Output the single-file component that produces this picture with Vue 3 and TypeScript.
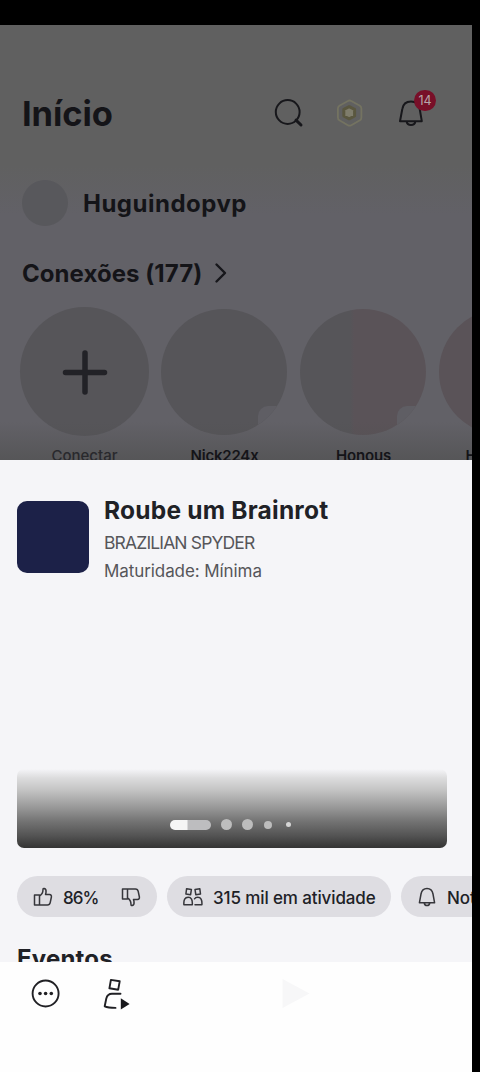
<script setup lang="ts">
interface Friend {
  name: string
  tone: string
  status: boolean
}

const friends: Friend[] = [
  { name: 'Nick224x', tone: 'cool', status: true },
  { name: 'Honous', tone: 'mixed', status: true },
  { name: 'Henrique2', tone: 'rosy', status: false },
]
</script>

<template>
  <div class="device">
    <div class="screen">
      <section class="home">
        <header class="topbar">
          <h1>Início</h1>
          <div class="actions">
            <svg class="search" width="30" height="30" viewBox="0 0 30 30">
              <circle cx="13.700" cy="14" r="11.900" />
              <path class="handle" d="M22 22.200 L27 27" />
            </svg>
            <svg class="coin" width="30" height="30" viewBox="0 0 30 30">
              <path class="rim" d="M12.900 3 Q14.600 2 16.300 3 L24.900 7.800 Q26.400 8.800 26.400 10.600 V19.400 Q26.400 21.200 24.900 22.200 L16.300 27.200 Q14.600 28.200 12.900 27.200 L4.400 22.200 Q2.900 21.200 2.900 19.400 V10.600 Q2.900 8.800 4.400 7.800 Z" />
              <path class="core" d="M14.200 8.700 L19.600 11.300 V18 L14.200 20.800 L8.800 18 V11.300 Z" />
            </svg>
            <div class="alerts">
              <svg width="28" height="28" viewBox="0 0 28 28">
                <path d="M3 23.200 L5.300 11 Q6.500 3.500 14 3.500 Q21.500 3.500 22.700 11 L24.800 23.200 Z M9.600 23.500 Q10.300 27 14 27 Q17.700 27 18.400 23.500" />
              </svg>
              <span class="count">14</span>
            </div>
          </div>
        </header>

        <div class="profile">
          <span class="avatar"></span>
          <span class="username">Huguindopvp</span>
        </div>

        <h2 class="connections">
          <span>Conexões (177)</span>
          <svg width="14" height="22" viewBox="0 0 14 22"><path d="M2.500 2.500 L11 11 L2.500 19.500" /></svg>
        </h2>

        <div class="friends">
          <div class="friend add">
            <div class="bubble">
              <svg width="46" height="46" viewBox="0 0 46 46"><path d="M23 4 V43 M3.500 23.500 H42.500" /></svg>
            </div>
            <span class="name">Conectar</span>
          </div>
          <div v-for="f in friends" :key="f.name" class="friend">
            <div class="bubble" :class="f.tone"><i v-if="f.status"></i></div>
            <span class="name">{{ f.name }}</span>
          </div>
        </div>
        <div class="shade"></div>
      </section>

      <section class="sheet">
        <div class="game">
          <div class="thumb"></div>
          <div class="details">
            <h2>Roube um Brainrot</h2>
            <p class="creator">BRAZILIAN SPYDER</p>
            <p class="rating">Maturidade: Mínima</p>
          </div>
        </div>

        <div class="carousel">
          <div class="pager">
            <span class="current"></span>
            <span class="dot"></span>
            <span class="dot"></span>
            <span class="dot small"></span>
            <span class="dot tiny"></span>
          </div>
        </div>

        <div class="chips">
          <div class="chip votes">
            <svg width="20" height="20" viewBox="0 0 20 20">
              <path d="M1.500 8 H6.500 V18 H1.500 Z M6.500 9 Q10 7 10 2.500 Q10 1.200 11.300 1.500 Q13.500 2 13 5.500 L12.500 7.500 H16.500 Q18.700 7.700 18.400 10 L17.200 15.700 Q16.700 18 14.500 18 H6.500" />
            </svg>
            <span class="percent">86%</span>
            <svg class="down" width="20" height="20" viewBox="0 0 20 20">
              <path d="M1.500 2 H6.500 V12 H1.500 Z M6.500 11 Q10 13 10 17.500 Q10 18.800 11.300 18.500 Q13.500 18 13 14.500 L12.500 12.500 H16.500 Q18.700 12.300 18.400 10 L17.200 4.300 Q16.700 2 14.500 2 H6.500" />
            </svg>
          </div>
          <div class="chip active">
            <svg width="20" height="20" viewBox="0 0 20 20">
              <path d="M3.600 1.700 L8.400 2.400 L7.600 7.700 L2.900 7 Z M12 2.400 L16.800 1.700 L17.500 7 L12.800 7.700 Z M.900 17.800 Q.3 10.300 5.200 10.300 Q9.800 10.300 9.300 17.800 Z M12 17.800 H18.900 Q19.400 10.300 14.700 10.300 Q12.500 10.300 11.500 11.800" />
            </svg>
            <span>315 mil em atividade</span>
          </div>
          <div class="chip notify">
            <svg width="18" height="20" viewBox="0 0 18 20">
              <path d="M1.400 15.800 L3 7 Q4 1.600 9 1.600 Q14 1.600 15 7 L16.600 15.800 Z M6.200 16 Q6.800 18.600 9 18.600 Q11.200 18.600 11.800 16" />
            </svg>
            <span>Notificar</span>
          </div>
        </div>

        <h2 class="events">Eventos</h2>
      </section>

      <footer class="bar">
        <svg class="more" width="30" height="30" viewBox="0 0 30 30">
          <circle class="ring" cx="14.600" cy="15.500" r="13" />
          <circle cx="9" cy="15.500" r="1.800" /><circle cx="14.600" cy="15.500" r="1.800" /><circle cx="20.300" cy="15.500" r="1.800" />
        </svg>
        <svg class="join" width="28" height="32" viewBox="0 0 28 32">
          <path class="line" d="M7.900 1.900 L16.700 3.300 L15.200 11.700 L6.400 10.300 Z M17.500 15.700 H9 Q4.500 15.700 3.300 20.500 L1.700 28.300 Q5 29.700 12.500 29.900" />
          <path d="M17.800 20.200 L26.600 25.900 L17.800 31.600 Z" />
        </svg>
        <svg class="play" width="30" height="32" viewBox="0 0 30 32"><path d="M.500 1 L27.500 15.500 L.500 30 Z" /></svg>
      </footer>
    </div>
  </div>
</template>

<style>
html, body { margin: 0; background: #000; }
</style>

<style scoped>
* { box-sizing: border-box; }
h1, h2, p { margin: 0; white-space: nowrap; }
svg { display: block; flex: none; fill: none; stroke-linecap: round; stroke-linejoin: round; }
.device {
  width: 480px; height: 1072px; padding-top: 25px; overflow: hidden; background: #000;
  font-family: Inter, "Noto Sans", sans-serif;
}
.screen { width: 472px; height: 1047px; overflow: hidden; display: flex; flex-direction: column; background: #f5f5f8; }
.home {
  position: relative; height: 435px; flex: none; overflow: hidden; color: #141418;
  background: linear-gradient(#606060 0, #606060 140px, #626167 190px, #626167 100%);
}
.topbar { display: flex; height: 130px; padding: 64px 36px 0 22px; justify-content: space-between; }
h1 { font-size: 34.500px; line-height: 50px; font-weight: 650; letter-spacing: -.1px; }
.actions { display: flex; }
.search { margin: 9px 31px 0 0; stroke: #17171b; stroke-width: 2; }
.search .handle { stroke-width: 3; }
.coin { margin: 9px 32px 0 0; stroke: #747361; stroke-width: 1.800; }
.coin .core { stroke: #5a573f; stroke-width: 3; fill: #7f7d6c; }
.alerts { position: relative; width: 39px; padding-top: 9px; }
.alerts svg { stroke: #17171b; stroke-width: 2; }
.count {
  position: absolute; left: 17px; top: 1px; width: 22px; height: 21px; border-radius: 11px;
  background: #780f28; color: #b6a5a9; font-size: 12.500px; line-height: 21px; text-align: center;
}
.profile { display: flex; align-items: center; height: 46px; margin-top: 25px; padding-left: 22px; gap: 15px; }
.avatar { width: 46px; height: 46px; border-radius: 50%; background: #58585c; }
.username { padding-top: 2px; font-size: 24px; font-weight: 650; line-height: 40px; letter-spacing: .500px; }
.connections { display: flex; align-items: center; margin-top: 29px; padding-left: 22px; height: 36px; gap: 12px; font-size: 24px; font-weight: 650; letter-spacing: .05px; }
.connections svg { stroke: #17171b; stroke-width: 2.400; }
.friends { display: flex; gap: 12px; margin-top: 16px; padding-left: 20px; }
.friend { width: 127px; flex: none; display: flex; flex-direction: column; align-items: center; }
.friend.add { width: 129px; }
.bubble { position: relative; width: 126px; height: 126px; margin: 2px 1px 1px 0; border-radius: 50%; background: #565559; overflow: hidden; }
.add .bubble { width: 129px; height: 129px; margin: 0; display: grid; place-items: center; }
.add svg { stroke: #222227; stroke-width: 5.500; }
.bubble.mixed { background: linear-gradient(90deg, #565559 40%, #5a5358 43%); }
.bubble.rosy { background: #5a5358; }
.bubble i { position: absolute; right: -3px; bottom: -3px; width: 32px; height: 32px; border-radius: 10px; background: #5f5e64; }
.name { position: relative; z-index: 1; margin-top: 8px; font-size: 15px; line-height: 24px; font-weight: 600; letter-spacing: -.200px; }
.add .name { font-weight: 500; color: #29292d; letter-spacing: 0; }
.shade { position: absolute; inset: auto 0 0; height: 38px; background: linear-gradient(#55555500, #505050aa); }

.sheet { height: 502px; flex: none; padding: 34px 0 0 17px; overflow: hidden; color: #202126; }
.game { display: flex; gap: 16px; height: 90px; }
.thumb { width: 72px; height: 72px; margin-top: 7px; border-radius: 10px; background: #1c2148; }
.details { margin-left: -1px; }
.details h2 { font-size: 24.500px; line-height: 32px; font-weight: 650; letter-spacing: .220px; }
.creator { font-size: 17.500px; line-height: 28px; margin-top: 3px; color: #56565a; letter-spacing: -.850px; }
.rating { font-size: 17px; line-height: 28px; color: #56565a; letter-spacing: -.080px; }
.carousel {
  width: 430px; height: 79px; margin-top: 185px; border-radius: 7px; display: flex; align-items: flex-end; padding: 0 0 18px 153px;
  background: linear-gradient(#f5f5f800 0, #dcdcdd 9px, #c4c4c4 21px, #9c9c9c 37px, #747474 52px, #555 66px, #343434 100%);
}
.pager { display: flex; align-items: center; height: 11px; }
.current { width: 41px; height: 10px; border-radius: 5px; background: linear-gradient(90deg, #f5f5f5 17px, #bdbdbf 18px); margin-right: 10px; }
.dot { width: 11px; height: 11px; border-radius: 50%; background: #bdbdbd; margin-right: 10px; }
.dot.small { width: 8px; height: 8px; margin: 0 14px 0 1px; }
.dot.tiny { width: 5px; height: 5px; background: #d5d5d5; margin: 0; }
.chips { display: flex; gap: 10px; margin-top: 28px; width: 600px; }
.chip { height: 41px; border-radius: 21px; background: #dedde2; display: flex; align-items: center; font-size: 17px; font-weight: 500; letter-spacing: -.120px; white-space: nowrap; }
.chip svg { stroke: #36363b; stroke-width: 1.500; }
.chip span { position: relative; top: 1px; }
.votes { width: 140px; padding-left: 16px; }
.percent { width: 58px; padding-left: 10px; box-sizing: content-box; letter-spacing: -.900px; }
.active { width: 224px; padding-left: 16px; gap: 10px; }
.notify { width: 140px; padding-left: 17px; gap: 11px; }
.events { margin-top: 24px; font-size: 24px; line-height: 36px; font-weight: 650; letter-spacing: .200px; }
.bar { height: 110px; flex: none; display: flex; padding: 16px 0 0 31px; background: #fefefe; }
.more { fill: #202024; }
.more .ring { fill: none; stroke: #202024; stroke-width: 1.900; }
.join { margin-left: 42px; fill: #18181b; overflow: visible; }
.join .line { fill: none; stroke: #202024; stroke-width: 1.900; }
.play { margin-left: 151px; fill: #f7f7f8; }
</style>
